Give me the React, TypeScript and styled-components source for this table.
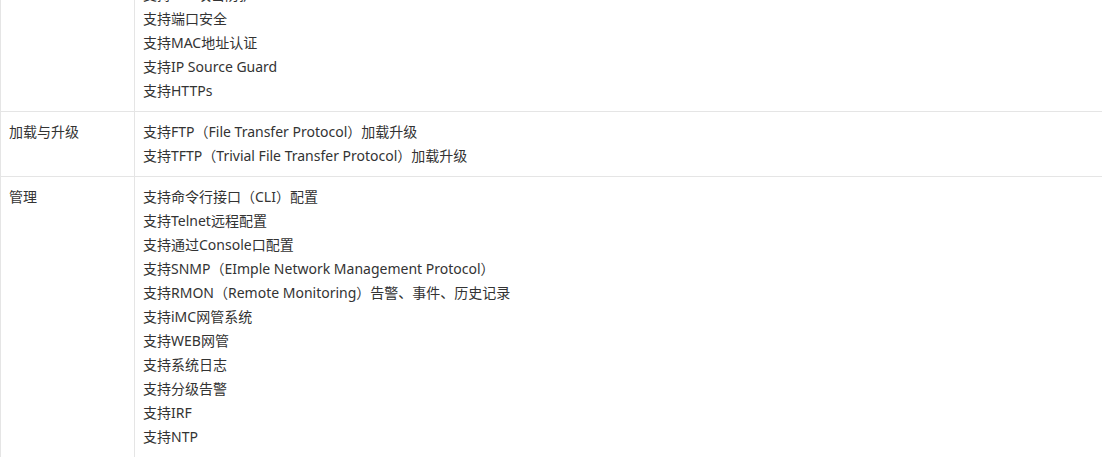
import React from "react";
import styled, { createGlobalStyle } from "styled-components";

interface SpecRow {
  name: string;
  items: string[];
}

const rows: SpecRow[] = [
  {
    name: "安全",
    items: [
      "支持802.1X认证",
      "支持DHCP Snooping",
      "支持ARP攻击防护",
      "支持端口安全",
      "支持MAC地址认证",
      "支持IP Source Guard",
      "支持HTTPs",
    ],
  },
  {
    name: "加载与升级",
    items: [
      "支持FTP（File Transfer Protocol）加载升级",
      "支持TFTP（Trivial File Transfer Protocol）加载升级",
    ],
  },
  {
    name: "管理",
    items: [
      "支持命令行接口（CLI）配置",
      "支持Telnet远程配置",
      "支持通过Console口配置",
      "支持SNMP（EImple Network Management Protocol）",
      "支持RMON（Remote Monitoring）告警、事件、历史记录",
      "支持iMC网管系统",
      "支持WEB网管",
      "支持系统日志",
      "支持分级告警",
      "支持IRF",
      "支持NTP",
    ],
  },
];

const App: React.FC = () => {
  return (
    <Page>
      <GlobalStyle />
      <SpecTable>
        <tbody>
          {rows.map((row) => (
            <tr key={row.name}>
              <NameCell>{row.name}</NameCell>
              <ValueCell>
                {row.items.map((item) => (
                  <Line key={item}>{item}</Line>
                ))}
              </ValueCell>
            </tr>
          ))}
        </tbody>
      </SpecTable>
    </Page>
  );
};

export default App;

/* Styled */

const GlobalStyle = createGlobalStyle`
  html, body {
    margin: 0;
    padding: 0;
    background: #fff;
    overflow: hidden;
  }
`;

const Page = styled.div`
  width: 1102px;
  height: 457px;
  overflow: hidden;
  font-family: "Noto Sans", "Noto Sans CJK SC", sans-serif;
  font-size: 14px;
  color: #333;
`;

const SpecTable = styled.table`
  width: 1110px;
  margin-top: -74px;
  border-collapse: collapse;
  table-layout: fixed;
`;

const NameCell = styled.td`
  width: 117px;
  padding: 8px;
  border: 1px solid #e5e5e5;
  vertical-align: top;
  line-height: 24px;
`;

const ValueCell = styled.td`
  padding: 8px;
  border: 1px solid #e5e5e5;
  vertical-align: top;
  line-height: 24px;
`;

const Line = styled.div`
  height: 24px;
  white-space: nowrap;
`;
